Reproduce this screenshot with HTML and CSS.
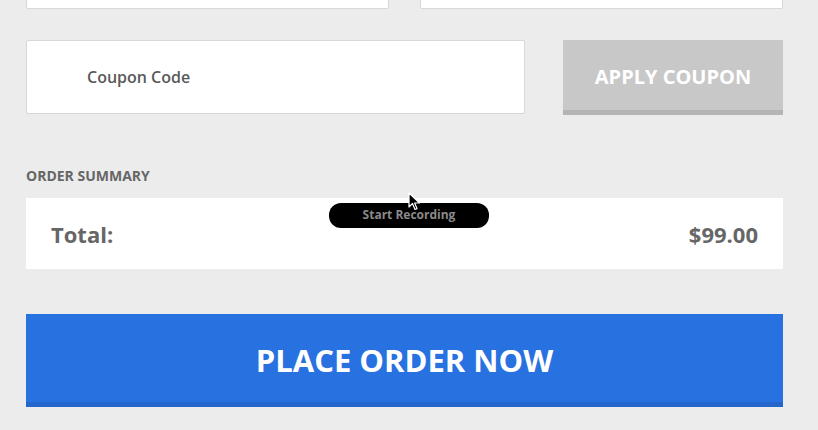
FILE: index.html
```html
<!DOCTYPE html>
<html>
<head>
<link rel="stylesheet" href="styles.css">
</head>
<body>
<div class="checkout">
  <div class="row top-row">
    <div class="field"></div>
    <div class="field"></div>
  </div>

  <div class="row coupon-row">
    <div class="field coupon"><span class="placeholder">Coupon Code</span></div>
    <button class="apply">APPLY COUPON</button>
  </div>

  <h4 class="label">ORDER SUMMARY</h4>
  <div class="summary">
    <span class="total">Total:</span>
    <span class="price">$99.00</span>
  </div>

  <button class="place">PLACE ORDER NOW</button>
</div>

<!-- screen recorder overlay -->
<div class="recorder">Start Recording</div>
<svg class="cursor" width="14" height="20" viewBox="0 0 14 20">
  <path d="M1 1 L1 15 L4.5 11.5 L7 17.5 L9 16.6 L6.6 11 L11.5 11 Z" fill="#000" stroke="#fff" stroke-width="1.2" stroke-linejoin="round"/>
</svg>
</body>
</html>
```

FILE: styles.css
```css
body {
  margin: 0;
  background: #ececec;
  font-family: "Open Sans", "Liberation Sans", sans-serif;
  overflow: hidden;
}

.checkout {
  padding: 0 35px 0 26px;
}

.row {
  display: flex;
}

.top-row {
  gap: 31px;
  margin-top: -41px;
}

.field {
  flex: 1;
  height: 48px;
  background: #fff;
  border: 1px solid #d8d8d8;
  border-radius: 2px;
}

.coupon-row {
  margin-top: 31px;
  gap: 38px;
}

.coupon {
  flex: none;
  height: 72px;
  display: flex;
  align-items: center;
  padding-left: 60px;
  width: 437px;
}

.placeholder {
  font-size: 16px;
  font-weight: 600;
  color: #5a5a5a;
}

.apply {
  flex: none;
  width: 220px;
  height: 75px;
  border: none;
  border-bottom: 5px solid #b4b4b4;
  background: #c8c8c8;
  color: #fff;
  font-family: inherit;
  font-size: 20px;
  font-weight: 700;
  padding: 3px 0 0;
}

.label {
  margin: 51px 0 0;
  font-size: 14px;
  font-weight: 700;
  color: #666;
  line-height: 20px;
}

.summary {
  margin-top: 12px;
  height: 71px;
  background: #fff;
  display: flex;
  align-items: center;
  justify-content: space-between;
  padding: 0 25px;
  font-size: 22px;
  font-weight: 700;
  color: #666;
}

.place {
  display: block;
  width: 100%;
  margin-top: 45px;
  height: 93px;
  border: none;
  border-bottom: 5px solid #2566cc;
  background: #2871e0;
  color: #fff;
  font-family: inherit;
  font-size: 31px;
  font-weight: 700;
  padding: 4px 0 0;
}

.recorder {
  position: absolute;
  left: 329px;
  top: 203px;
  width: 160px;
  height: 25px;
  border-radius: 12px;
  background: #000;
  color: #8a8a8a;
  font-size: 12px;
  font-weight: 700;
  line-height: 24px;
  text-align: center;
}

.cursor {
  position: absolute;
  left: 408px;
  top: 192px;
}
```
